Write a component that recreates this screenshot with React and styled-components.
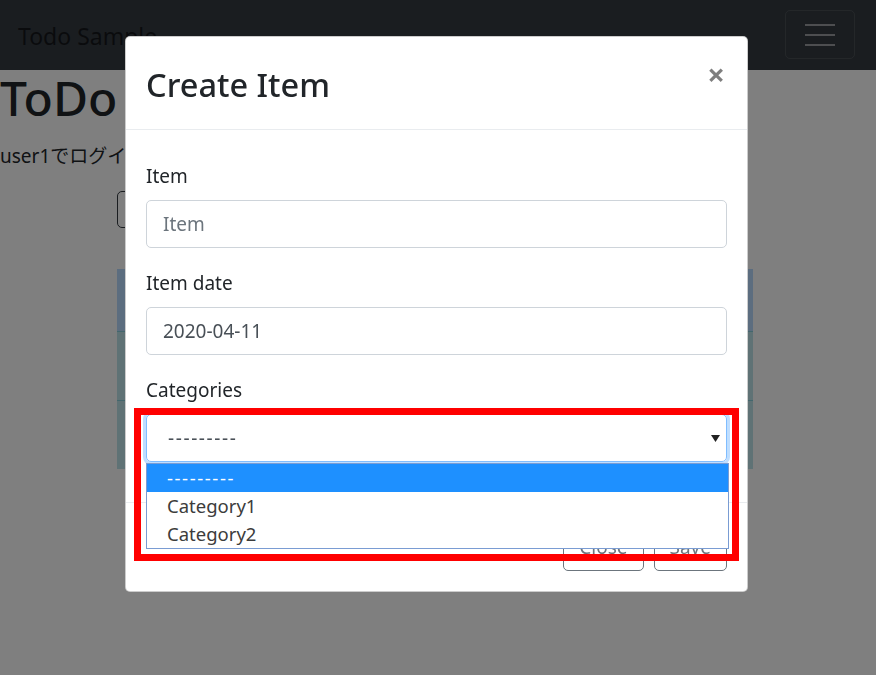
import React from "react";
import styled, { createGlobalStyle } from "styled-components";

const GlobalStyle = createGlobalStyle`
    html, body {
        margin: 0;
        padding: 0;
        background: #fff;
        overflow: hidden;
    }
    body {
        font-family: 'Noto Sans', 'Noto Sans CJK JP', sans-serif;
        color: #212529;
    }
    * {
        box-sizing: border-box;
    }
`

const EMPTY = "---------";
const categories = [EMPTY, "Category1", "Category2"];

const App = () => {
    return (
        <>
            <GlobalStyle />
            <Navbar>
                <Brand>Todo Sample</Brand>
                <Toggler>
                    <TogglerLine />
                    <TogglerLine />
                    <TogglerLine />
                </Toggler>
            </Navbar>
            <Main>
                <PageTitle>ToDo</PageTitle>
                <LoginText>user1でログインしています</LoginText>
                <Content>
                    <OutlineButton>Create Item</OutlineButton>
                    <Table>
                        <thead>
                            <HeadRow>
                                <Cell as="th">Item</Cell>
                                <Cell as="th">Date</Cell>
                                <Cell as="th">Category</Cell>
                            </HeadRow>
                        </thead>
                        <tbody>
                            <BodyRow>
                                <Cell>Shopping</Cell>
                                <Cell>2020-04-10</Cell>
                                <Cell>Category1</Cell>
                            </BodyRow>
                            <BodyRow>
                                <Cell>Cleaning</Cell>
                                <Cell>2020-04-11</Cell>
                                <Cell>Category2</Cell>
                            </BodyRow>
                        </tbody>
                    </Table>
                </Content>
            </Main>

            <Backdrop />
            <ModalLayer>
                <Dialog>
                    <Header>
                        <Title>Create Item</Title>
                        <Close>×</Close>
                    </Header>
                    <Body>
                        <FormGroup>
                            <Label>Item</Label>
                            <Input placeholder="Item" />
                        </FormGroup>
                        <FormGroup>
                            <Label>Item date</Label>
                            <Input defaultValue="2020-04-11" />
                        </FormGroup>
                        <FormGroup>
                            <Label>Categories</Label>
                            <SelectWrap>
                                <SelectBox>
                                    <Dashes>{EMPTY}</Dashes>
                                    <svg width="9" height="7" viewBox="0 0 9 7">
                                        <polygon points="0,0 9,0 4.5,7" fill="#222" />
                                    </svg>
                                </SelectBox>
                                <OptionList>
                                    {categories.map((c, i) => (
                                        <Option key={c} selected={i === 0}>
                                            {c === EMPTY ? <Dashes>{c}</Dashes> : c}
                                        </Option>
                                    ))}
                                </OptionList>
                                <Highlight />
                            </SelectWrap>
                        </FormGroup>
                    </Body>
                    <Footer>
                        <FooterButton>Close</FooterButton>
                        <FooterButton>Save</FooterButton>
                    </Footer>
                </Dialog>
            </ModalLayer>
        </>
    )
}

const Navbar = styled.nav`
    height: 70px;
    background: #343a40;
    display: flex;
    align-items: center;
    justify-content: space-between;
    padding: 0 21px 0 18px;
`

const Brand = styled.div`
    font-size: 23px;
    color: rgba(0, 0, 0, 0.6);
    margin-top: 2px;
`

const Toggler = styled.div`
    width: 70px;
    height: 49px;
    margin-top: -1px;
    border: 1px solid rgba(255, 255, 255, 0.1);
    border-radius: 5px;
    display: flex;
    flex-direction: column;
    align-items: center;
    justify-content: center;
    gap: 8px;
`

const TogglerLine = styled.span`
    width: 30px;
    height: 2px;
    background: rgba(255, 255, 255, 0.5);
`

const Main = styled.main`
    padding: 0;
`

const PageTitle = styled.h1`
    font-size: 48px;
    font-weight: 500;
    line-height: 56px;
    margin: 0 0 16px 0;
`

const LoginText = styled.p`
    font-size: 19px;
    line-height: 28px;
    margin: 0;
`

const Content = styled.div`
    margin-left: 117px;
    width: 636px;
    padding-top: 21px;
`

const OutlineButton = styled.button`
    height: 37px;
    padding: 0 14px;
    border: 1px solid #343a40;
    border-radius: 5px;
    background: transparent;
    font-family: inherit;
    font-size: 16px;
    color: #343a40;
`

const Table = styled.table`
    width: 100%;
    margin-top: 41px;
    border-collapse: collapse;
`

const HeadRow = styled.tr`
    height: 62px;
    background: #b8daff;
`

const BodyRow = styled.tr`
    height: 69px;
    background: #bee5eb;
    border-top: 1px solid #86cfda;
`

const Cell = styled.td`
    padding: 0 14px;
    text-align: left;
    font-size: 18px;
`

const Backdrop = styled.div`
    position: fixed;
    inset: 0;
    background: rgba(0, 0, 0, 0.5);
`

const ModalLayer = styled.div`
    position: fixed;
    inset: 0;
    padding: 36px 0 0 125px;
`

const Dialog = styled.div`
    width: 623px;
    background: #fff;
    border: 1px solid rgba(0, 0, 0, 0.2);
    border-radius: 5px;
`

const Header = styled.div`
    display: flex;
    justify-content: space-between;
    align-items: flex-start;
    padding: 26px 20px 23px 20px;
    border-bottom: 1px solid #e9ecef;
`

const Title = styled.h2`
    margin: 0;
    font-size: 32.5px;
    font-weight: 500;
    line-height: 43px;
    color: #212529;
`

const Close = styled.button`
    border: 0;
    background: transparent;
    padding: 0;
    margin: -4px 2px 0 0;
    font-family: inherit;
    font-size: 31px;
    font-weight: 700;
    line-height: 30px;
    color: #000;
    opacity: 0.5;
`

const Body = styled.div`
    padding: 31px 20px 20px 20px;
`

const FormGroup = styled.div`
    margin-bottom: 20px;
`

const Label = styled.label`
    display: block;
    font-size: 19px;
    line-height: 30px;
    margin-bottom: 9px;
`

const Input = styled.input`
    display: block;
    width: 100%;
    height: 48px;
    padding: 0 16px;
    border: 1px solid #ced4da;
    border-radius: 5px;
    font-family: inherit;
    font-size: 19px;
    color: #495057;
    outline: none;

    &::placeholder {
        color: #6c757d;
    }
`

const SelectWrap = styled.div`
    position: relative;
`

const SelectBox = styled.div`
    height: 48px;
    display: flex;
    align-items: center;
    justify-content: space-between;
    padding: 0 6px 0 21px;
    border: 1px solid #80bdff;
    border-radius: 5px;
    box-shadow: 0 0 0 3px rgba(0, 123, 255, 0.25);
    font-size: 19px;
    color: #495057;
`

const Dashes = styled.span`
    letter-spacing: 1.6px;
`

const OptionList = styled.div`
    position: absolute;
    top: calc(100% + 1px);
    left: 0;
    width: 583px;
    background: #fff;
    border: 1px solid #7a9cd3;
`

const Option = styled.div`
    height: 28px;
    line-height: 28px;
    padding-left: 20px;
    font-size: 18.5px;
    background: ${p => p.selected ? "#1e90ff" : "#fff"};
    color: ${p => p.selected ? "#fff" : "#3c3c3c"};
`

const Highlight = styled.div`
    position: absolute;
    left: -12px;
    top: -6px;
    width: 605px;
    height: 153px;
    border: 7px solid #ff0000;
    pointer-events: none;
`

const Footer = styled.div`
    display: flex;
    justify-content: flex-end;
    gap: 10px;
    padding: 20px 20px 20px 20px;
    border-top: 1px solid #e9ecef;
`

const FooterButton = styled.button`
    height: 48px;
    padding: 0 15px;
    border: 1px solid #6c757d;
    border-radius: 5px;
    background: transparent;
    font-family: inherit;
    font-size: 19px;
    color: #6c757d;
`

export default App
